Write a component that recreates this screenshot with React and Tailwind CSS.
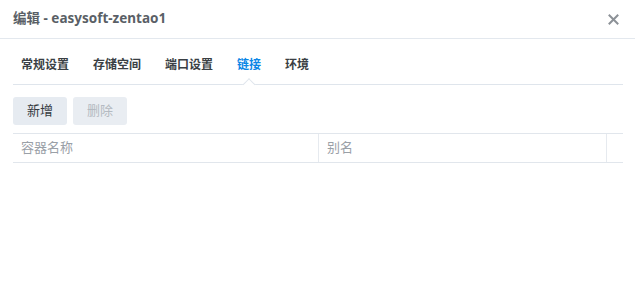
import { useState } from 'react';

const tabs = ['常规设置', '存储空间', '端口设置', '链接', '环境'];

const App = () => {
    const [active, setActive] = useState(3);

    return (
        <div className="w-[635px] h-[299px] bg-white overflow-hidden font-['Noto_Sans','Noto_Sans_CJK_SC',sans-serif]">
            {/* Header */}
            <div className="h-[39px] flex items-center justify-between pl-[13px] pr-[16px] border-b border-[#e3e8ee]">
                <span className="text-[13.5px] font-bold text-[#5a5f66] leading-none">编辑 - easysoft-zentao1</span>
                <svg width="11" height="11" viewBox="0 0 11 11" className="text-[#8c9197]">
                    <path d="M1.5 1.5 L9.5 9.5 M9.5 1.5 L1.5 9.5" stroke="currentColor" strokeWidth="2" strokeLinecap="square" />
                </svg>
            </div>

            <div className="pl-[13px] pr-[12px]">
                {/* Tabs */}
                <div className="h-[46px] flex items-end gap-6 pl-2 border-b border-[#dfe5ec]">
                    {tabs.map((t, i) => (
                        <button
                            key={t}
                            onClick={() => setActive(i)}
                            className={`relative pb-[10px] text-[12px] leading-[18px] font-bold ${i === active ? 'text-[#0a86e6]' : 'text-[#3a3f44]'}`}
                        >
                            {t}
                            {i === active && (
                                <span className="absolute left-1/2 -translate-x-1/2 bottom-[-5px] w-[9px] h-[9px] rotate-45 bg-white border-l border-t border-[#dfe5ec]"></span>
                            )}
                        </button>
                    ))}
                </div>

                {/* Toolbar */}
                <div className="flex gap-[6px] mt-[12px]">
                    <button className="w-[54px] h-[28px] rounded-[3px] bg-[#e6ebf1] text-[13px] text-[#353a40]">新增</button>
                    <button className="w-[54px] h-[28px] rounded-[3px] bg-[#e9edf2] text-[13px] text-[#b4bac1]">删除</button>
                </div>

                {/* Table header */}
                <div className="mt-[8px] h-[30px] grid grid-cols-[306px_288px_1fr] border-t border-b border-[#e1e6ec] text-[13px] text-[#9aa0a7]">
                    <div className="flex items-center pl-2 border-r border-[#e6eaef]">容器名称</div>
                    <div className="flex items-center pl-2 border-r border-[#e6eaef]">别名</div>
                    <div></div>
                </div>
            </div>
        </div>
    );
};

export default App;
